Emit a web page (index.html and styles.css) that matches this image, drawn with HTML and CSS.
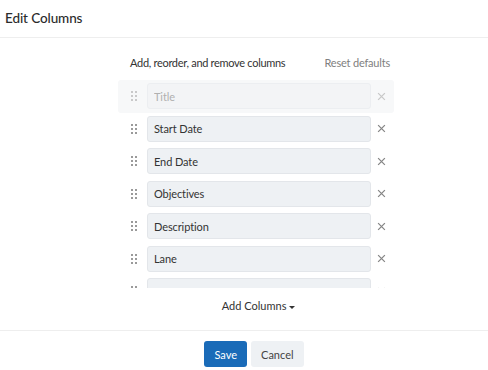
FILE: index.html
```html
<!DOCTYPE html>
<html lang="en">
<head>
  <meta charset="UTF-8">
  <meta name="viewport" content="width=device-width, initial-scale=1.0">
  <title>Edit Columns</title>
  <link rel="stylesheet" href="styles.css">
</head>
<body>
  <div class="modal">
    <div class="modal-header">
      <h1>Edit Columns</h1>
    </div>

    <div class="modal-body">
      <div class="columns-panel">
        <div class="panel-top">
          <span class="hint">Add, reorder, and remove columns</span>
          <button class="link-button">Reset defaults</button>
        </div>

        <!-- Список колонок -->
        <div class="column-list">
          <div class="column-row locked">
            <span class="handle"></span>
            <input type="text" placeholder="Title" disabled>
            <button class="remove"><svg viewBox="0 0 8 8"><path d="M1 1L7 7M7 1L1 7"/></svg></button>
          </div>
          <div class="column-row">
            <span class="handle"></span>
            <input type="text" value="Start Date">
            <button class="remove"><svg viewBox="0 0 8 8"><path d="M1 1L7 7M7 1L1 7"/></svg></button>
          </div>
          <div class="column-row">
            <span class="handle"></span>
            <input type="text" value="End Date">
            <button class="remove"><svg viewBox="0 0 8 8"><path d="M1 1L7 7M7 1L1 7"/></svg></button>
          </div>
          <div class="column-row">
            <span class="handle"></span>
            <input type="text" value="Objectives">
            <button class="remove"><svg viewBox="0 0 8 8"><path d="M1 1L7 7M7 1L1 7"/></svg></button>
          </div>
          <div class="column-row">
            <span class="handle"></span>
            <input type="text" value="Description">
            <button class="remove"><svg viewBox="0 0 8 8"><path d="M1 1L7 7M7 1L1 7"/></svg></button>
          </div>
          <div class="column-row">
            <span class="handle"></span>
            <input type="text" value="Lane">
            <button class="remove"><svg viewBox="0 0 8 8"><path d="M1 1L7 7M7 1L1 7"/></svg></button>
          </div>
          <div class="column-row">
            <span class="handle"></span>
            <input type="text" value="Owner">
            <button class="remove"><svg viewBox="0 0 8 8"><path d="M1 1L7 7M7 1L1 7"/></svg></button>
          </div>
        </div>

        <div class="add-columns">
          <button class="add-button">Add Columns <span class="caret"></span></button>
        </div>
      </div>
    </div>

    <div class="modal-footer">
      <button class="btn btn-primary">Save</button>
      <button class="btn btn-secondary">Cancel</button>
    </div>
  </div>
</body>
</html>
```

FILE: styles.css
```css
* {
  margin: 0;
  padding: 0;
  box-sizing: border-box;
}

body {
  font-family: Lato, "Noto Sans", sans-serif;
  background: white;
  color: #333;
}

button {
  font-family: inherit;
  background: none;
  border: none;
  cursor: pointer;
}

.modal {
  width: 488px;
  height: 370px;
  display: flex;
  flex-direction: column;
}

.modal-header {
  height: 38px;
  padding: 10px 5px 0;
  border-bottom: 1px solid #eeeeee;
}

h1 {
  font-size: 13.5px;
  font-weight: 500;
  color: #2b2b2b;
  letter-spacing: -0.1px;
}

.modal-body {
  flex: 1;
  padding-left: 118px;
}

.columns-panel {
  width: 276px;
}

.panel-top {
  display: flex;
  justify-content: space-between;
  align-items: center;
  height: 42px;
  padding: 7px 4px 0 12px;
  font-size: 11px;
  letter-spacing: -0.3px;
}

.hint {
  color: #333;
}

.link-button {
  font-size: 11px;
  letter-spacing: -0.2px;
  color: #808080;
}

.column-list {
  height: 208px;
  overflow: hidden;
}

.column-row {
  display: flex;
  align-items: center;
  height: 32.5px;
  padding: 0 8px 0 12px;
}

.column-row.locked {
  background: #f7f8f9;
  border-radius: 3px;
}

.handle {
  width: 8px;
  height: 10px;
  margin-right: 9px;
  background-image: radial-gradient(circle, #9a9a9a 0.9px, transparent 1.2px);
  background-size: 4px 4px;
  background-position: 0 -1px;
}

.locked .handle {
  opacity: 0.5;
}

input {
  width: 224px;
  height: 26px;
  padding: 0 6px;
  border: 1px solid #e3e6ea;
  border-radius: 3px;
  background: #eef1f4;
  font-family: inherit;
  font-size: 11px;
  letter-spacing: -0.1px;
  color: #333;
}

input:focus {
  outline: none;
}

input:disabled {
  background: #f3f4f6;
  border-color: #eceef1;
}

input::placeholder {
  color: #b0b0b0;
}

.remove {
  margin-left: 6px;
  width: 9px;
  height: 9px;
  display: flex;
}

.remove svg {
  width: 9px;
  height: 9px;
  stroke: #858585;
  stroke-width: 1.1;
}

.locked .remove svg {
  stroke: #c8c8c8;
}

.add-columns {
  display: flex;
  justify-content: center;
  padding: 11px 0 0 5px;
}

.add-button {
  font-size: 11px;
  color: #333;
}

.caret {
  display: inline-block;
  vertical-align: middle;
  border-left: 3px solid transparent;
  border-right: 3px solid transparent;
  border-top: 3px solid #333;
}

.modal-footer {
  height: 40px;
  flex-shrink: 0;
  border-top: 1px solid #eeeeee;
  display: flex;
  justify-content: center;
  align-items: flex-start;
  gap: 4px;
  padding: 10px 0 0 20px;
}

.btn {
  height: 26px;
  padding: 0 10px;
  border-radius: 3px;
  font-size: 11px;
}

.btn-primary {
  background: #1a6bb8;
  color: white;
}

.btn-secondary {
  background: #eef1f4;
  color: #444;
}
```
